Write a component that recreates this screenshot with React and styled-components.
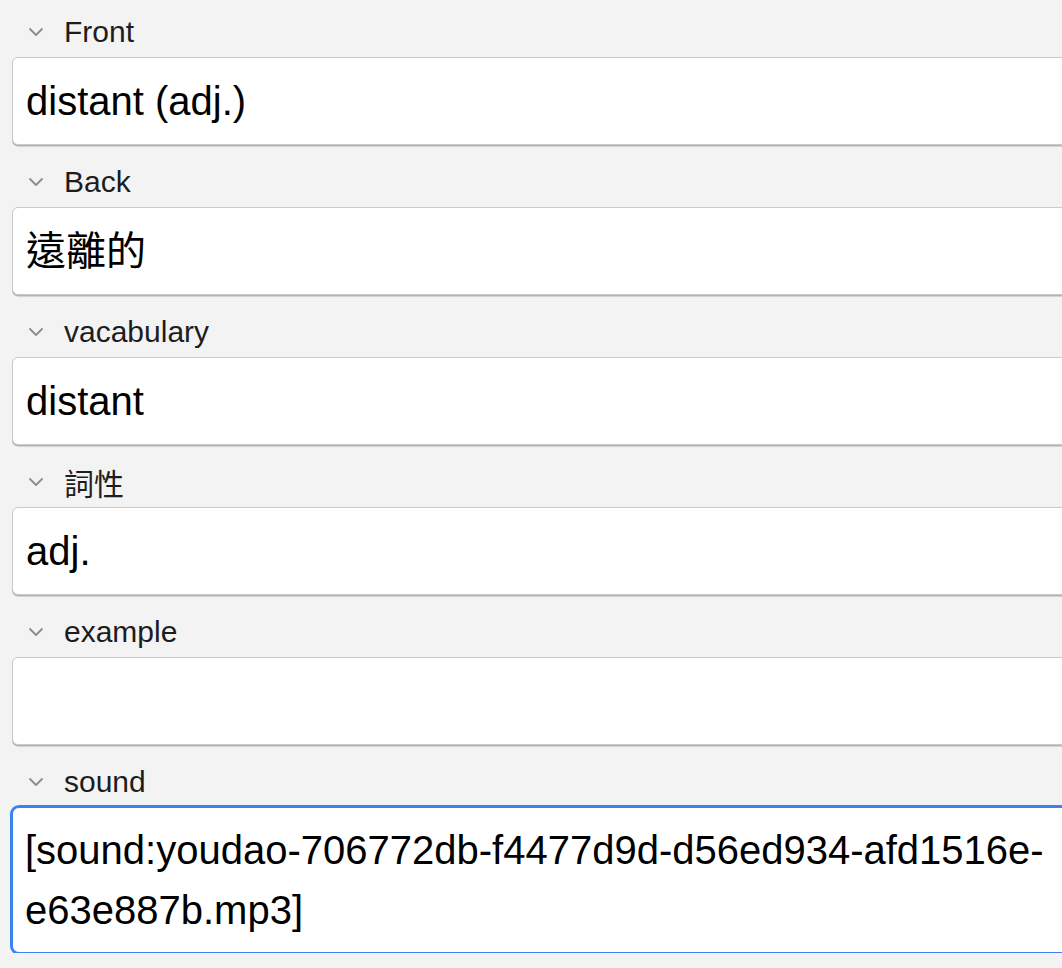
import React from 'react'
import styled, { createGlobalStyle } from 'styled-components'

const GlobalStyle = createGlobalStyle`
  html, body {
    margin: 0;
    padding: 0;
    background: #f3f3f3;
    overflow: hidden;
  }
`

const fields = [
  { name: 'Front', value: 'distant (adj.)' },
  { name: 'Back', value: '遠離的' },
  { name: 'vacabulary', value: 'distant' },
  { name: '詞性', value: 'adj.' },
  { name: 'example', value: '' },
  { name: 'sound', value: '[sound:youdao-706772db-f4477d9d-d56ed934-afd1516e-e63e887b.mp3]', focused: true },
]

const Editor = styled.div`
  display: flex;
  flex-direction: column;
  padding: 7px 0 0 12px;
  font-family: "Liberation Sans", Arial, "Noto Sans CJK TC", sans-serif;
`

const Field = styled.div`
  display: flex;
  flex-direction: column;
`

const LabelRow = styled.div`
  display: flex;
  align-items: center;
  height: 50px;
  margin-top: ${p => (p.first ? '0' : '12px')};
  padding-left: 16px;
  gap: 20px;
  font-size: 30px;
  color: #1d1d1d;
`

const Chevron = styled.svg`
  width: 16px;
  height: 10px;
  flex-shrink: 0;
`

const Box = styled.div`
  box-sizing: border-box;
  margin-right: -40px;
  min-height: 88px;
  padding: ${p => (p.focused ? '12px 20px 12px 12px' : '13px 20px 13px 13px')};
  background: #fff;
  border: 1px solid ${p => (p.focused ? '#3a82f4' : '#c9c9c9')};
  border-radius: ${p => (p.focused ? '7px' : '6px')};
  box-shadow: ${p => (p.focused ? '0 0 0 2px #3a82f4' : '0 1.5px 0 #b4b4b4')};
  font-size: 40px;
  line-height: 60px;
  color: #000;
  overflow-wrap: anywhere;
`

const ChevronIcon = () => (
  <Chevron viewBox="0 0 16 10">
    <path d="M2 2l6 6 6-6" fill="none" stroke="#8c8c8c" strokeWidth="1.8" strokeLinecap="round" strokeLinejoin="round" />
  </Chevron>
)

export default function App() {
  return (
    <>
      <GlobalStyle />
      <Editor>
        {fields.map((f, i) => (
          <Field key={f.name}>
            <LabelRow first={i === 0}>
              <ChevronIcon />
              <span>{f.name}</span>
            </LabelRow>
            <Box focused={f.focused}>{f.value}</Box>
          </Field>
        ))}
      </Editor>
    </>
  )
}
